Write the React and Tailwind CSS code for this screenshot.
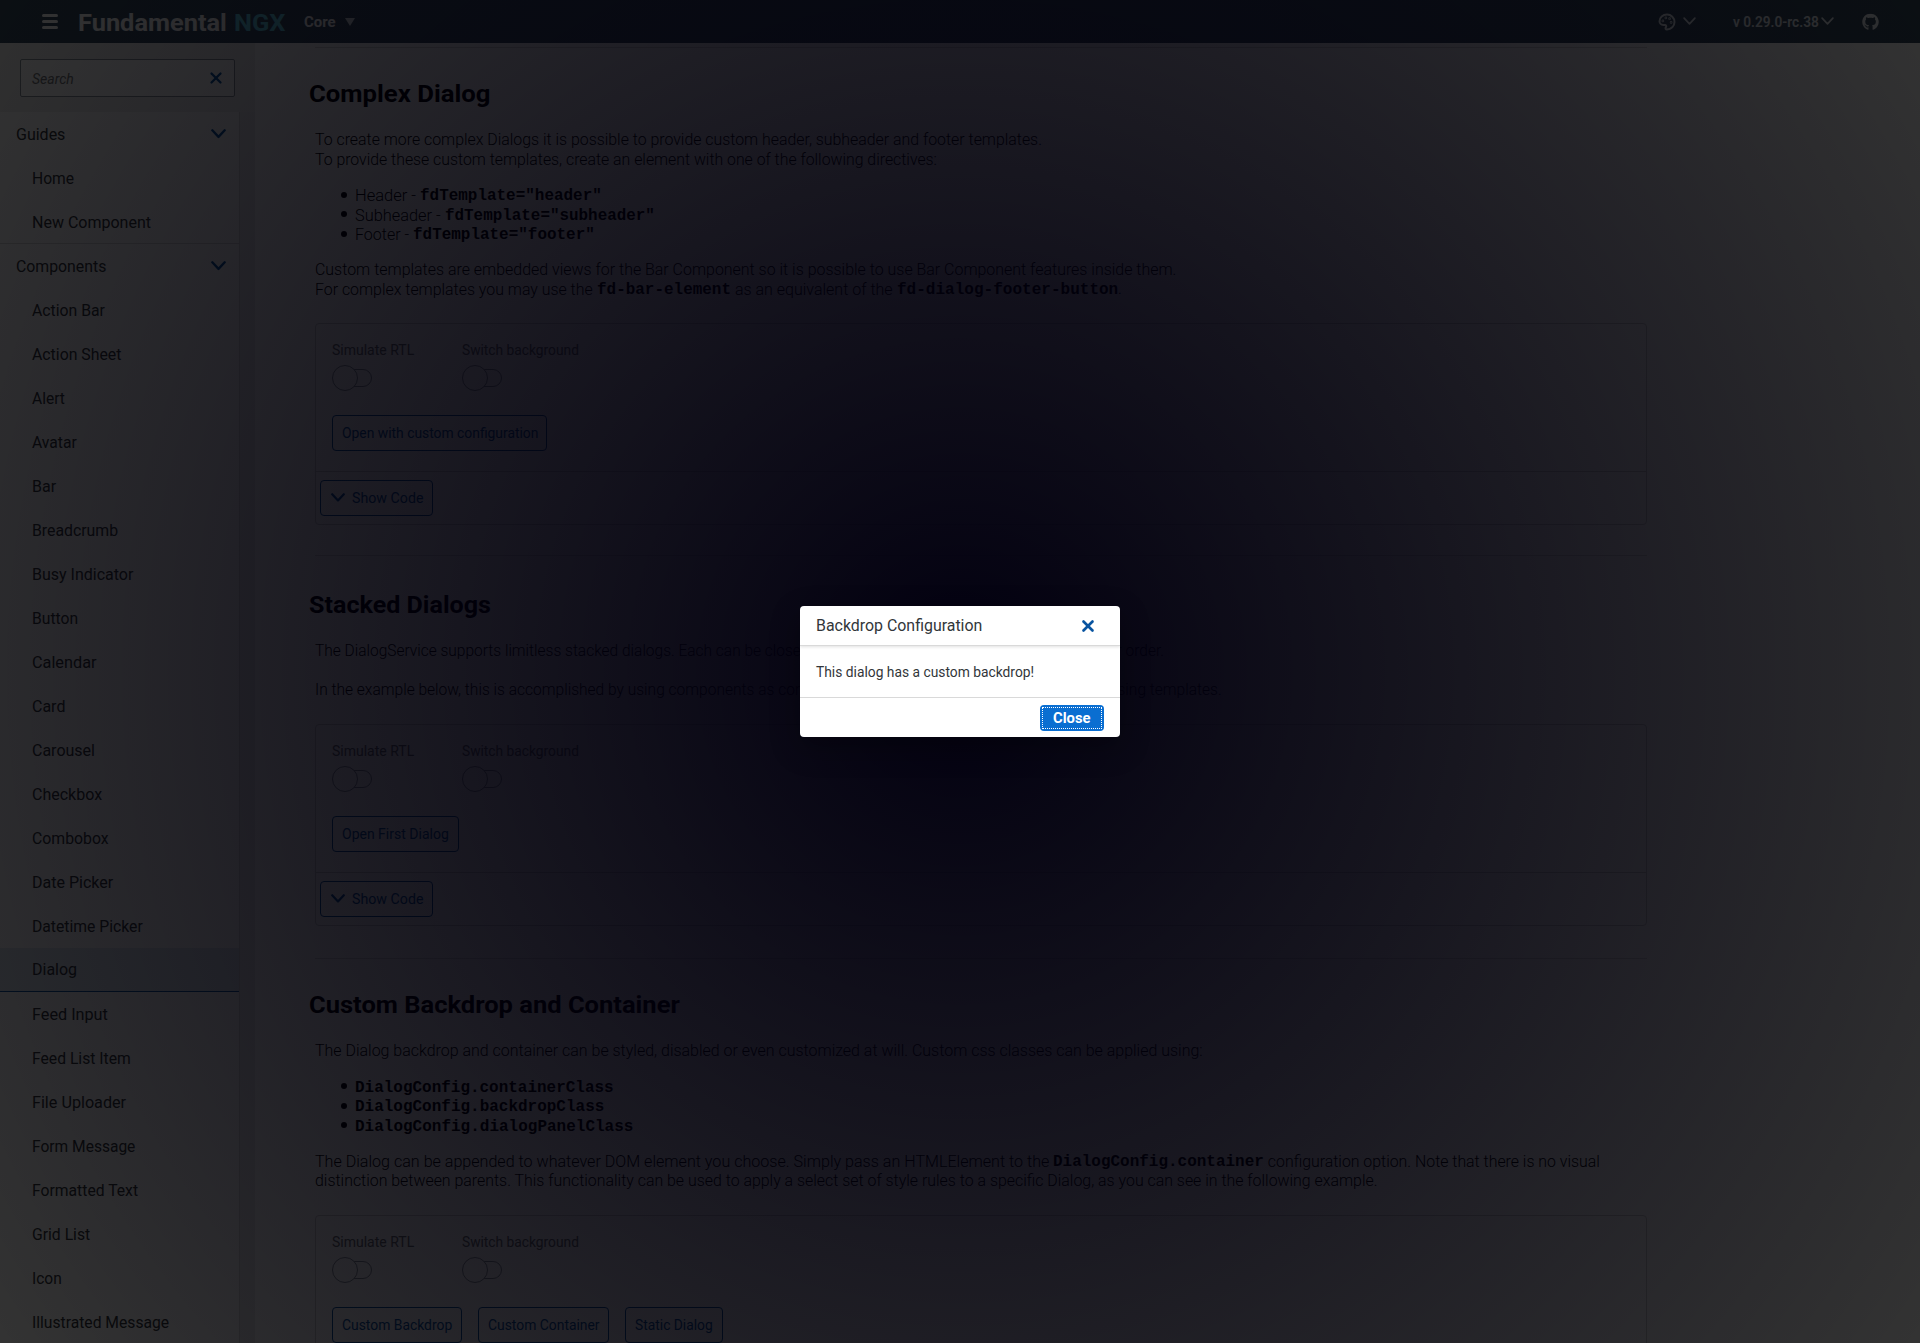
import React from "react";
import { Palette, X } from "lucide-react";
import { FaGithub } from "react-icons/fa";

const components = [
  "Action Bar", "Action Sheet", "Alert", "Avatar", "Bar", "Breadcrumb", "Busy Indicator", "Button",
  "Calendar", "Card", "Carousel", "Checkbox", "Combobox", "Date Picker", "Datetime Picker", "Dialog",
  "Feed Input", "Feed List Item", "File Uploader", "Form Message", "Formatted Text", "Grid List",
  "Icon", "Illustrated Message",
];

// Scales a run of text horizontally so that it fills exactly the given width;
// dy nudges its baseline down.
function Fit({ w, dy = 1, children, className = "" }) {
  const ref = React.useRef(null);
  const [s, setS] = React.useState(1);
  React.useLayoutEffect(() => {
    setS(w / ref.current.offsetWidth);
  }, [w]);
  return (
    <span className={"inline-block whitespace-nowrap " + className} style={{ width: w }}>
      <span ref={ref} className="inline-block origin-left whitespace-pre" style={{ transform: `translateY(${dy}px) scaleX(${s})` }}>
        {children}
      </span>
    </span>
  );
}

function Chevron({ w = 14, h = 9, stroke = 2.2, className = "" }) {
  return (
    <svg width={w} height={h} viewBox="0 0 14 9" fill="none" stroke="currentColor" strokeWidth={stroke} strokeLinecap="round" strokeLinejoin="round" className={className}>
      <path d="M1.2 1.2 7 7.4l5.8-6.2" />
    </svg>
  );
}

function Code({ children, w }) {
  return (
    <code className="font-['Liberation_Mono',monospace] text-[15.6px] font-bold">
      <Fit w={w} dy={2}>{children}</Fit>
    </code>
  );
}

function NavGroup({ label, w }) {
  return (
    <div className="flex h-11 items-center justify-between pl-4 pr-[13px] text-[16px]">
      <Fit w={w}>{label}</Fit>
      <Chevron w={15} h={9.6} className="text-[#0854a0]" />
    </div>
  );
}

const navWidths = {
  Home: 42, "New Component": 119, "Action Bar": 73, "Action Sheet": 89, Alert: 33, Avatar: 45, Bar: 24,
  Breadcrumb: 86, "Busy Indicator": 101, Button: 46, Calendar: 64, Card: 33, Carousel: 63, Checkbox: 70,
  Combobox: 77, "Date Picker": 81, "Datetime Picker": 111, Dialog: 45, "Feed Input": 76,
  "Feed List Item": 99, "File Uploader": 94, "Form Message": 103, "Formatted Text": 106, "Grid List": 58,
  Icon: 30, "Illustrated Message": 137,
};

function NavItem({ label }) {
  const active = label === "Dialog";
  return (
    <div
      className={
        "flex h-11 shrink-0 items-center pl-8 text-[16px] " +
        (active ? "border-b border-[#0854a0] bg-[#dfe9f2] pb-px" : "")
      }
    >
      <Fit w={navWidths[label]}>{label}</Fit>
    </div>
  );
}

function Toggle({ label, w }) {
  return (
    <div>
      <div className="h-5 text-[14px] leading-5 text-[#6a6d70]"><Fit w={w} dy={0.5}>{label}</Fit></div>
      <div className="mt-[6px] flex h-[26px] items-center">
        <div className="z-10 size-[26px] rounded-full border border-[#89919a] bg-white" />
        <div className="-ml-[14px] h-[18px] w-7 rounded-r-full border border-[#89919a]" />
      </div>
    </div>
  );
}

function Btn({ w, tw, children }) {
  return (
    <div
      className="flex h-9 items-center justify-center rounded border border-[#0854a0] text-[14px] text-[#0854a0]"
      style={{ width: w }}
    >
      <Fit w={tw}>{children}</Fit>
    </div>
  );
}

function Example({ buttons }) {
  return (
    <div className="h-[202px] w-[1332px] rounded border border-[#cfcfcf]">
      <div className="h-[148px] border-b border-[#cfcfcf] px-4 pt-[15px]">
        <div className="flex">
          <div className="w-[130px]"><Toggle label="Simulate RTL" w={82} /></div>
          <Toggle label="Switch background" w={117} />
        </div>
        <div className="mt-[24px] flex gap-4">
          {buttons.map(([t, w, tw]) => <Btn key={t} w={w} tw={tw}>{t}</Btn>)}
        </div>
      </div>
      <div className="mt-2 ml-1 flex h-9 w-[113px] items-center gap-[7px] rounded border border-[#0854a0] pl-[10px] text-[14px] text-[#0854a0]">
        <Chevron />
        <Fit w={71}>Show Code</Fit>
      </div>
    </div>
  );
}

function Heading({ children, w }) {
  return (
    <h2 className="-ml-[6px] h-8 text-[24px] font-bold leading-8 text-black"><Fit w={w}>{children}</Fit></h2>
  );
}

function Row({ children }) {
  return <div className="flex h-[19.5px] whitespace-nowrap text-[16px] leading-[19.5px]">{children}</div>;
}

function Line({ children, w }) {
  return <Row><Fit w={w} dy={0}>{children}</Fit></Row>;
}

function Bullet({ children }) {
  return (
    <div className="flex h-[19.5px] items-center pl-[26px]">
      <span className="mr-[8px] size-[6px] rounded-full bg-black" />
      <Row>{children}</Row>
    </div>
  );
}

export default function App() {
  return (
    <div className="relative h-[1343px] w-[1920px] overflow-hidden bg-white font-['Roboto',sans-serif] text-[#32363a]">
      <header className="flex h-[43px] items-center bg-[#354a5f] text-white">
        <div className="ml-[42px] flex w-4 flex-col gap-[3.5px]">
          <span className="h-[2.5px] rounded bg-white" />
          <span className="h-[2.5px] rounded bg-white" />
          <span className="h-[2.5px] rounded bg-white" />
        </div>
        <div className="ml-5 pt-[3px] text-[23px] font-bold"><Fit w={149}>Fundamental</Fit></div>
        <div className="ml-[7px] pt-[3px] text-[23px] font-bold text-[#5fcbe3]"><Fit w={52}>NGX</Fit></div>
        <div className="ml-[18px] text-[14px] font-bold"><Fit w={32}>Core</Fit></div>
        <div className="ml-[9px] h-0 w-0 border-x-[5.5px] border-t-[8px] border-x-transparent border-t-[#d1d9e0]" />
        <div className="ml-auto flex items-center text-[#e6edf3]">
          <Palette size={18} strokeWidth={2.6} className="-scale-x-100" />
          <Chevron w={13} h={8.4} stroke={1.8} className="ml-[7px]" />
          <span className="ml-[37px] text-[14px] font-semibold"><Fit w={86}>v 0.29.0-rc.38</Fit></span>
          <Chevron w={13} h={8.4} stroke={1.8} className="ml-[2px]" />
          <FaGithub size={17} className="mr-[41px] ml-[28px] translate-y-[0.5px]" />
        </div>
      </header>
      <div className="flex h-[1300px]">
        <aside className="flex w-[255px] shrink-0 flex-col bg-[#ececee]">
          <div className="h-[69px] shrink-0 bg-[#f0f0f0] pl-5 pt-4">
            <div className="flex h-[38px] w-[215px] items-center justify-between rounded-[2px] border border-[#89919a] bg-white pl-[11px] pr-[9px] text-[14px]">
              <span className="italic text-[#74777a]"><Fit w={42} dy={0.5}>Search</Fit></span>
              <X size={18} strokeWidth={3} className="text-[#0854a0]" />
            </div>
          </div>
          <nav className="flex min-h-0 w-[240px] flex-1 flex-col overflow-hidden border-r border-[#d9d9d9] bg-white">
            <div className="h-[132px] shrink-0 border-b border-[#d9d9d9]">
              <NavGroup label="Guides" w={49} />
              <NavItem label="Home" />
              <NavItem label="New Component" />
            </div>
            <div className="shrink-0"><NavGroup label="Components" w={90} /></div>
            {components.map((c) => <NavItem key={c} label={c} />)}
          </nav>
        </aside>
        <main className="w-[1400px] pl-[60px]">
          <div className="h-[5px] w-[1332px] border-b border-[#d9d9d9]" />
          <div className="h-[508px] w-[1332px] border-b border-[#d9d9d9] pt-[29px]">
            <Heading w={181}>Complex Dialog</Heading>
            <div className="mt-[21px] font-light text-black">
              <Line w={727}>To create more complex Dialogs it is possible to provide custom header, subheader and footer templates.</Line>
              <Line w={622}>To provide these custom templates, create an element with one of the following directives:</Line>
              <div className="mt-[16px]">
                <Bullet><Fit w={65}>{"Header - "}</Fit><Code w={182}>fdTemplate="header"</Code></Bullet>
                <Bullet><Fit w={90}>{"Subheader - "}</Fit><Code w={210}>fdTemplate="subheader"</Code></Bullet>
                <Bullet><Fit w={58}>{"Footer - "}</Fit><Code w={182}>fdTemplate="footer"</Code></Bullet>
              </div>
              <div className="mt-4" />
              <Line w={861}>Custom templates are embedded views for the Bar Component so it is possible to use Bar Component features inside them.</Line>
              <Row>
                <Fit w={282} dy={0.5}>{"For complex templates you may use the "}</Fit>
                <Code w={134}>fd-bar-element</Code>
                <Fit w={166} dy={0.5}>{" as an equivalent of the "}</Fit>
                <Code w={221}>fd-dialog-footer-button</Code>.
              </Row>
            </div>
            <div className="mt-[24px]"><Example buttons={[["Open with custom configuration", 215, 196]]} /></div>
          </div>
          <div className="h-[403px] w-[1332px] border-b border-[#d9d9d9] pt-[32px]">
            <Heading w={182}>Stacked Dialogs</Heading>
            <div className="mt-[21px] font-light text-black">
              <Line w={849}>The DialogService supports limitless stacked dialogs. Each can be closed independently and can be opened in whatever order.</Line>
              <div className="h-[19.5px]" />
              <Line w={907}>In the example below, this is accomplished by using components as content. The same can also be accomplished by using templates.</Line>
            </div>
            <div className="mt-[24px]"><Example buttons={[["Open First Dialog", 127, 107]]} /></div>
          </div>
          <div className="pt-[29px]">
            <Heading w={371}>Custom Backdrop and Container</Heading>
            <div className="mt-[21px] font-light text-black">
              <Line w={888}>The Dialog backdrop and container can be styled, disabled or even customized at will. Custom css classes can be applied using:</Line>
              <div className="mt-[16px]">
                <Bullet><Code w={259}>DialogConfig.containerClass</Code></Bullet>
                <Bullet><Code w={249}>DialogConfig.backdropClass</Code></Bullet>
                <Bullet><Code w={278}>DialogConfig.dialogPanelClass</Code></Bullet>
              </div>
              <div className="mt-4" />
              <Row>
                <Fit w={738} dy={0.5}>{"The Dialog can be appended to whatever DOM element you choose. Simply pass an HTMLElement to the "}</Fit>
                <Code w={211}>DialogConfig.container</Code>
                <Fit w={336} dy={0.5}>{" configuration option. Note that there is no visual"}</Fit>
              </Row>
              <Line w={1063}>distinction between parents. This functionality can be used to apply a select set of style rules to a specific Dialog, as you can see in the following example.</Line>
            </div>
            <div className="mt-[24.5px]">
              <Example buttons={[["Custom Backdrop", 130, 110], ["Custom Container", 131, 112], ["Static Dialog", 98, 78]]} />
            </div>
          </div>
        </main>
      </div>

      <div className="absolute inset-0 z-20 flex items-center justify-center bg-[radial-gradient(circle,rgba(2,0,16,1)_0%,rgba(0,0,0,0.8)_100%)]">
        <div className="flex h-[131px] w-80 flex-col overflow-hidden rounded bg-white shadow-[0_10px_30px_rgba(0,0,0,0.3)]">
          <div className="z-10 flex h-10 shrink-0 items-center justify-between border-b border-[#d9d9d9] pl-4 pr-[23px] text-[16px] shadow-[0_1px_3px_rgba(0,0,0,0.12)]">
            <Fit w={166} dy={0}>Backdrop Configuration</Fit>
            <X size={18} strokeWidth={3.5} className="text-[#0854a0]" />
          </div>
          <div className="flex flex-1 items-center px-4 text-[14px]"><Fit w={218}>This dialog has a custom backdrop!</Fit></div>
          <div className="flex h-10 shrink-0 items-center justify-end border-t border-[#d9d9d9] pr-4">
            <div className="h-[26px] w-16 rounded bg-[#0a6ed1] p-[2px]">
              <div className="flex h-full items-center justify-center border border-dotted border-white text-[14px] font-bold text-white">
                <Fit w={38}>Close</Fit>
              </div>
            </div>
          </div>
        </div>
      </div>
    </div>
  );
}
